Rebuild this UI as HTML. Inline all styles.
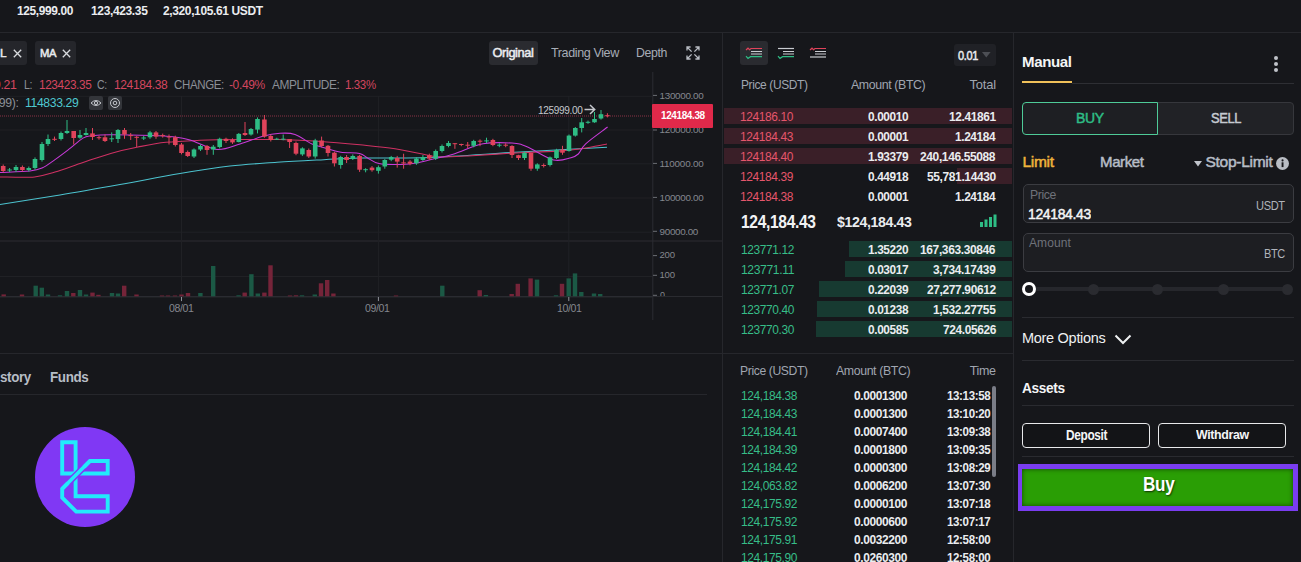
<!DOCTYPE html><html><head><meta charset="utf-8"><style>
html,body{margin:0;padding:0;}
body{width:1301px;height:562px;overflow:hidden;background:#16171b;position:relative;font-family:"Liberation Sans",sans-serif;}
.t{position:absolute;white-space:nowrap;transform-origin:0 0;}
.r{position:absolute;}
svg{position:absolute;left:0;top:0;}
</style></head><body>
<svg width="722" height="353" viewBox="0 0 722 353" style="left:0;top:0">
<rect x="0" y="95.8" width="652" height="1" fill="#202125"/>
<rect x="0" y="129.5" width="652" height="1" fill="#202125"/>
<rect x="0" y="163.3" width="652" height="1" fill="#202125"/>
<rect x="0" y="197.5" width="652" height="1" fill="#202125"/>
<rect x="0" y="231.7" width="652" height="1" fill="#202125"/>
<rect x="0" y="276" width="652" height="1" fill="#202125"/>
<rect x="0" y="240.5" width="722" height="1" fill="#2c2d32"/>
<rect x="181.0" y="96" width="1" height="206" fill="#202125"/>
<rect x="377.9" y="96" width="1" height="206" fill="#202125"/>
<rect x="568.3" y="96" width="1" height="206" fill="#202125"/>
<rect x="652.3" y="72" width="1" height="248" fill="#2c2d32"/>
<rect x="653" y="94.9" width="4" height="1" fill="#6a6d73"/>
<rect x="653" y="129.5" width="4" height="1" fill="#6a6d73"/>
<rect x="653" y="162.9" width="4" height="1" fill="#6a6d73"/>
<rect x="653" y="196.9" width="4" height="1" fill="#6a6d73"/>
<rect x="653" y="230.8" width="4" height="1" fill="#6a6d73"/>
<rect x="653" y="255.1" width="4" height="1" fill="#6a6d73"/>
<rect x="653" y="274.8" width="4" height="1" fill="#6a6d73"/>
<rect x="653" y="294.8" width="4" height="1" fill="#6a6d73"/>
<rect x="0" y="296.3" width="652" height="1" fill="#34363b"/>
<rect x="181.0" y="297" width="1" height="4" fill="#8e9199"/>
<rect x="377.9" y="297" width="1" height="4" fill="#8e9199"/>
<rect x="568.3" y="297" width="1" height="4" fill="#8e9199"/>
<line x1="0" y1="116" x2="652" y2="116" stroke="#8a3346" stroke-width="1" stroke-dasharray="1 1"/>
<rect x="1.5" y="294.4" width="4.4" height="1.9" fill="#752439"/>
<rect x="19.8" y="294.5" width="4.4" height="1.8" fill="#752439"/>
<rect x="33.5" y="285.7" width="4.4" height="10.6" fill="#1b5945"/>
<rect x="39.6" y="287.7" width="4.4" height="8.6" fill="#1b5945"/>
<rect x="45.8" y="294.5" width="4.4" height="1.8" fill="#1b5945"/>
<rect x="57.8" y="295.3" width="4.4" height="1.0" fill="#1b5945"/>
<rect x="64.8" y="291.0" width="4.4" height="5.3" fill="#1b5945"/>
<rect x="71.1" y="293.0" width="4.4" height="3.3" fill="#752439"/>
<rect x="77.8" y="290.0" width="4.4" height="6.3" fill="#1b5945"/>
<rect x="83.8" y="294.5" width="4.4" height="1.8" fill="#1b5945"/>
<rect x="90.3" y="292.6" width="4.4" height="3.7" fill="#752439"/>
<rect x="96.2" y="294.8" width="4.4" height="1.5" fill="#752439"/>
<rect x="109.8" y="293.0" width="4.4" height="3.3" fill="#1b5945"/>
<rect x="115.8" y="293.5" width="4.4" height="2.8" fill="#1b5945"/>
<rect x="122.0" y="285.7" width="4.4" height="10.6" fill="#752439"/>
<rect x="134.3" y="294.5" width="4.4" height="1.8" fill="#752439"/>
<rect x="159.8" y="295.5" width="4.4" height="0.8" fill="#752439"/>
<rect x="165.8" y="295.5" width="4.4" height="0.8" fill="#752439"/>
<rect x="172.8" y="295.5" width="4.4" height="0.8" fill="#752439"/>
<rect x="179.3" y="294.5" width="4.4" height="1.8" fill="#752439"/>
<rect x="185.8" y="293.0" width="4.4" height="3.3" fill="#752439"/>
<rect x="198.2" y="293.0" width="4.4" height="3.3" fill="#1b5945"/>
<rect x="211.0" y="266.0" width="4.4" height="30.3" fill="#1b5945"/>
<rect x="236.4" y="295.3" width="4.4" height="1.0" fill="#1b5945"/>
<rect x="242.5" y="292.6" width="4.4" height="3.7" fill="#752439"/>
<rect x="249.2" y="274.2" width="4.4" height="22.1" fill="#1b5945"/>
<rect x="255.6" y="293.5" width="4.4" height="2.8" fill="#1b5945"/>
<rect x="262.2" y="292.6" width="4.4" height="3.7" fill="#752439"/>
<rect x="268.3" y="265.3" width="4.4" height="31.0" fill="#752439"/>
<rect x="287.8" y="295.5" width="4.4" height="0.8" fill="#752439"/>
<rect x="293.8" y="295.3" width="4.4" height="1.0" fill="#752439"/>
<rect x="299.8" y="295.3" width="4.4" height="1.0" fill="#1b5945"/>
<rect x="312.6" y="294.5" width="4.4" height="1.8" fill="#1b5945"/>
<rect x="318.8" y="283.3" width="4.4" height="13.0" fill="#752439"/>
<rect x="325.0" y="280.0" width="4.4" height="16.3" fill="#752439"/>
<rect x="331.2" y="293.5" width="4.4" height="2.8" fill="#752439"/>
<rect x="393.8" y="295.5" width="4.4" height="0.8" fill="#752439"/>
<rect x="440.1" y="285.7" width="4.4" height="10.6" fill="#1b5945"/>
<rect x="477.5" y="290.2" width="4.4" height="6.1" fill="#752439"/>
<rect x="483.7" y="295.0" width="4.4" height="1.3" fill="#1b5945"/>
<rect x="509.5" y="294.0" width="4.4" height="2.3" fill="#752439"/>
<rect x="515.6" y="283.8" width="4.4" height="12.5" fill="#752439"/>
<rect x="528.4" y="278.4" width="4.4" height="17.9" fill="#752439"/>
<rect x="534.8" y="279.6" width="4.4" height="16.7" fill="#1b5945"/>
<rect x="553.8" y="295.3" width="4.4" height="1.0" fill="#1b5945"/>
<rect x="559.8" y="283.8" width="4.4" height="12.5" fill="#752439"/>
<rect x="566.5" y="278.4" width="4.4" height="17.9" fill="#1b5945"/>
<rect x="572.8" y="273.4" width="4.4" height="22.9" fill="#1b5945"/>
<rect x="579.1" y="292.0" width="4.4" height="4.3" fill="#1b5945"/>
<rect x="591.8" y="293.5" width="4.4" height="2.8" fill="#1b5945"/>
<rect x="598.0" y="294.0" width="4.4" height="2.3" fill="#1b5945"/>
<path d="M0,204.5 C10.0,202.9 40.0,198.3 60.0,195.0 C80.0,191.7 100.0,188.1 120.0,184.5 C140.0,180.9 161.7,176.6 180.0,173.5 C198.3,170.4 213.8,167.9 230.0,166.0 C246.2,164.1 261.3,163.4 277.0,162.3 C292.7,161.2 310.2,160.4 324.0,159.7 C337.8,159.0 342.3,158.4 360.0,158.0 C377.7,157.6 403.3,158.5 430.0,157.5 C456.7,156.5 490.5,153.7 520.0,152.0 C549.5,150.3 592.5,148.1 607.0,147.3" fill="none" stroke="#4cc3cf" stroke-width="1.05"/>
<path d="M0,176.9 C5.8,176.9 25.4,177.7 34.6,176.9 C43.8,176.1 46.9,174.4 55.0,172.0 C63.1,169.6 73.7,165.5 83.0,162.4 C92.3,159.3 101.5,156.0 110.7,153.4 C119.9,150.8 128.8,148.8 138.0,147.0 C147.2,145.2 155.7,143.4 166.0,142.3 C176.3,141.2 187.7,140.8 200.0,140.3 C212.3,139.8 226.7,139.6 240.0,139.5 C253.3,139.4 267.0,139.3 280.0,139.6 C293.0,139.9 304.7,140.4 318.0,141.3 C331.3,142.2 347.2,143.6 360.0,144.8 C372.8,146.1 383.3,147.0 395.0,148.8 C406.7,150.6 422.2,154.3 430.0,155.7 C437.8,157.1 435.7,157.0 442.0,157.0 C448.3,157.0 455.0,156.6 468.0,155.9 C481.0,155.2 504.7,153.5 520.0,152.7 C535.3,151.9 549.5,151.7 560.0,151.0 C570.5,150.3 575.2,149.6 583.0,148.4 C590.8,147.2 603.0,144.7 607.0,144.0" fill="none" stroke="#cf3163" stroke-width="1.05"/>
<path d="M0,172.5 C5.0,172.2 23.0,171.8 30.0,171.0 C37.0,170.2 37.8,169.9 42.0,168.0 C46.2,166.1 50.5,162.7 55.0,159.6 C59.5,156.5 64.3,152.8 69.0,149.2 C73.7,145.6 79.2,140.3 83.0,138.1 C86.8,135.9 87.5,136.4 92.0,135.8 C96.5,135.2 100.0,134.8 110.0,134.7 C120.0,134.6 141.5,135.1 152.0,135.4 C162.5,135.8 166.7,136.0 173.0,136.8 C179.3,137.6 182.7,137.9 190.0,140.0 C197.3,142.1 208.7,148.8 217.0,149.5 C225.3,150.2 232.5,146.2 240.0,144.0 C247.5,141.8 255.3,138.4 262.0,136.6 C268.7,134.8 274.5,133.7 280.0,133.3 C285.5,132.9 289.7,132.6 295.0,134.4 C300.3,136.2 306.8,141.7 312.0,144.0 C317.2,146.3 321.2,146.8 326.0,148.2 C330.8,149.6 335.4,151.4 341.0,152.3 C346.6,153.2 355.2,152.5 359.6,153.4 C364.0,154.3 364.4,156.3 367.6,158.0 C370.8,159.7 373.4,162.5 379.0,163.6 C384.6,164.7 394.5,164.6 401.0,164.4 C407.5,164.2 413.2,163.5 418.0,162.7 C422.8,161.9 424.0,161.2 430.0,159.8 C436.0,158.4 445.2,156.7 454.0,154.0 C462.8,151.3 473.3,145.6 483.0,143.8 C492.7,142.0 504.7,142.6 512.0,143.1 C519.3,143.6 520.1,143.9 527.0,146.7 C533.9,149.5 546.2,158.1 553.5,159.9 C560.8,161.7 566.9,158.7 571.0,157.7 C575.1,156.7 575.8,156.3 578.3,154.0 C580.8,151.7 580.8,148.3 585.7,143.8 C590.6,139.3 604.0,129.8 607.6,127.0" fill="none" stroke="#c83ad9" stroke-width="1.05"/>
<rect x="2.7" y="164.5" width="1" height="8.0" fill="#e0435b"/>
<rect x="0.9" y="166.0" width="4.6" height="5.0" fill="#e0435b"/>
<rect x="9.1" y="168.0" width="1" height="4.0" fill="#2ebd85"/>
<rect x="7.3" y="169.5" width="4.6" height="1.0" fill="#2ebd85"/>
<rect x="15.5" y="165.0" width="1" height="7.0" fill="#2ebd85"/>
<rect x="13.7" y="167.0" width="4.6" height="3.0" fill="#2ebd85"/>
<rect x="21.9" y="165.5" width="1" height="6.0" fill="#e0435b"/>
<rect x="20.1" y="167.0" width="4.6" height="3.0" fill="#e0435b"/>
<rect x="28.3" y="166.5" width="1" height="5.0" fill="#2ebd85"/>
<rect x="26.5" y="168.0" width="4.6" height="2.0" fill="#2ebd85"/>
<rect x="34.5" y="157.4" width="1" height="12.3" fill="#2ebd85"/>
<rect x="32.7" y="159.0" width="4.6" height="9.0" fill="#2ebd85"/>
<rect x="41.5" y="142.0" width="1" height="19.6" fill="#2ebd85"/>
<rect x="39.7" y="144.0" width="4.6" height="16.0" fill="#2ebd85"/>
<rect x="47.5" y="134.5" width="1" height="11.5" fill="#2ebd85"/>
<rect x="45.7" y="139.0" width="4.6" height="5.0" fill="#2ebd85"/>
<rect x="54.0" y="136.6" width="1" height="4.4" fill="#e0435b"/>
<rect x="52.2" y="138.8" width="4.6" height="1.0" fill="#e0435b"/>
<rect x="60.5" y="131.5" width="1" height="9.0" fill="#2ebd85"/>
<rect x="58.7" y="133.0" width="4.6" height="6.0" fill="#2ebd85"/>
<rect x="66.5" y="120.0" width="1" height="14.0" fill="#2ebd85"/>
<rect x="64.7" y="131.0" width="4.6" height="2.0" fill="#2ebd85"/>
<rect x="73.2" y="131.0" width="1" height="13.5" fill="#e0435b"/>
<rect x="71.4" y="131.0" width="4.6" height="7.0" fill="#e0435b"/>
<rect x="79.5" y="130.0" width="1" height="8.8" fill="#2ebd85"/>
<rect x="77.7" y="135.0" width="4.6" height="2.7" fill="#2ebd85"/>
<rect x="85.5" y="128.0" width="1" height="7.6" fill="#2ebd85"/>
<rect x="83.7" y="133.0" width="4.6" height="2.0" fill="#2ebd85"/>
<rect x="92.0" y="128.0" width="1" height="12.0" fill="#e0435b"/>
<rect x="90.2" y="133.4" width="4.6" height="3.6" fill="#e0435b"/>
<rect x="98.5" y="135.7" width="1" height="4.0" fill="#e0435b"/>
<rect x="96.7" y="137.2" width="4.6" height="1.0" fill="#e0435b"/>
<rect x="104.5" y="134.5" width="1" height="7.5" fill="#e0435b"/>
<rect x="102.7" y="137.3" width="4.6" height="3.7" fill="#e0435b"/>
<rect x="111.2" y="132.4" width="1" height="9.6" fill="#2ebd85"/>
<rect x="109.4" y="138.3" width="4.6" height="1.0" fill="#2ebd85"/>
<rect x="117.5" y="129.0" width="1" height="14.0" fill="#2ebd85"/>
<rect x="115.7" y="130.0" width="4.6" height="9.0" fill="#2ebd85"/>
<rect x="124.0" y="128.0" width="1" height="10.8" fill="#e0435b"/>
<rect x="122.2" y="130.0" width="4.6" height="4.5" fill="#e0435b"/>
<rect x="130.2" y="133.0" width="1" height="7.0" fill="#e0435b"/>
<rect x="128.4" y="135.1" width="4.6" height="1.0" fill="#e0435b"/>
<rect x="136.2" y="136.0" width="1" height="11.0" fill="#e0435b"/>
<rect x="134.4" y="136.8" width="4.6" height="1.0" fill="#e0435b"/>
<rect x="143.2" y="136.0" width="1" height="4.0" fill="#2ebd85"/>
<rect x="141.4" y="137.5" width="4.6" height="1.0" fill="#2ebd85"/>
<rect x="149.5" y="130.9" width="1" height="7.9" fill="#2ebd85"/>
<rect x="147.7" y="132.4" width="4.6" height="4.9" fill="#2ebd85"/>
<rect x="155.5" y="131.0" width="1" height="7.8" fill="#e0435b"/>
<rect x="153.7" y="132.4" width="4.6" height="4.2" fill="#e0435b"/>
<rect x="162.2" y="133.6" width="1" height="4.0" fill="#e0435b"/>
<rect x="160.4" y="135.1" width="4.6" height="1.0" fill="#e0435b"/>
<rect x="168.5" y="134.5" width="1" height="10.0" fill="#e0435b"/>
<rect x="166.7" y="136.5" width="4.6" height="1.0" fill="#e0435b"/>
<rect x="174.8" y="135.7" width="1" height="10.8" fill="#e0435b"/>
<rect x="173.0" y="137.2" width="4.6" height="7.8" fill="#e0435b"/>
<rect x="181.0" y="143.0" width="1" height="11.4" fill="#e0435b"/>
<rect x="179.2" y="144.5" width="4.6" height="8.5" fill="#e0435b"/>
<rect x="187.2" y="150.5" width="1" height="6.5" fill="#e0435b"/>
<rect x="185.4" y="152.0" width="4.6" height="4.0" fill="#e0435b"/>
<rect x="193.5" y="148.4" width="1" height="9.6" fill="#2ebd85"/>
<rect x="191.7" y="149.5" width="4.6" height="7.0" fill="#2ebd85"/>
<rect x="200.0" y="144.5" width="1" height="6.5" fill="#2ebd85"/>
<rect x="198.2" y="146.0" width="4.6" height="3.5" fill="#2ebd85"/>
<rect x="206.5" y="145.0" width="1" height="9.8" fill="#e0435b"/>
<rect x="204.7" y="146.0" width="4.6" height="4.0" fill="#e0435b"/>
<rect x="212.8" y="145.0" width="1" height="9.8" fill="#2ebd85"/>
<rect x="211.0" y="146.7" width="4.6" height="2.8" fill="#2ebd85"/>
<rect x="219.2" y="137.7" width="1" height="10.7" fill="#2ebd85"/>
<rect x="217.4" y="138.8" width="4.6" height="8.2" fill="#2ebd85"/>
<rect x="225.5" y="137.7" width="1" height="5.3" fill="#e0435b"/>
<rect x="223.7" y="138.8" width="4.6" height="2.2" fill="#e0435b"/>
<rect x="232.0" y="138.3" width="1" height="5.6" fill="#e0435b"/>
<rect x="230.2" y="139.8" width="4.6" height="2.6" fill="#e0435b"/>
<rect x="238.3" y="133.0" width="1" height="9.4" fill="#2ebd85"/>
<rect x="236.5" y="133.9" width="4.6" height="8.1" fill="#2ebd85"/>
<rect x="244.5" y="122.0" width="1" height="14.0" fill="#e0435b"/>
<rect x="242.7" y="133.0" width="4.6" height="2.0" fill="#e0435b"/>
<rect x="250.5" y="128.0" width="1" height="7.6" fill="#2ebd85"/>
<rect x="248.7" y="129.0" width="4.6" height="5.5" fill="#2ebd85"/>
<rect x="257.0" y="117.4" width="1" height="16.0" fill="#2ebd85"/>
<rect x="255.2" y="119.0" width="4.6" height="10.6" fill="#2ebd85"/>
<rect x="263.9" y="115.0" width="1" height="22.7" fill="#e0435b"/>
<rect x="262.1" y="119.5" width="4.6" height="17.1" fill="#e0435b"/>
<rect x="270.3" y="134.5" width="1" height="7.0" fill="#e0435b"/>
<rect x="268.5" y="136.0" width="4.6" height="4.0" fill="#e0435b"/>
<rect x="276.3" y="137.7" width="1" height="2.1" fill="#2ebd85"/>
<rect x="274.5" y="138.7" width="4.6" height="1.0" fill="#2ebd85"/>
<rect x="282.7" y="134.5" width="1" height="5.8" fill="#2ebd85"/>
<rect x="280.9" y="138.7" width="4.6" height="1.0" fill="#2ebd85"/>
<rect x="289.1" y="139.0" width="1" height="9.0" fill="#e0435b"/>
<rect x="287.3" y="139.0" width="4.6" height="3.0" fill="#e0435b"/>
<rect x="295.5" y="141.5" width="1" height="13.7" fill="#e0435b"/>
<rect x="293.7" y="143.0" width="4.6" height="10.7" fill="#e0435b"/>
<rect x="301.9" y="147.3" width="1" height="8.6" fill="#2ebd85"/>
<rect x="300.1" y="148.4" width="4.6" height="6.0" fill="#2ebd85"/>
<rect x="308.3" y="148.5" width="1" height="9.5" fill="#e0435b"/>
<rect x="306.5" y="150.0" width="4.6" height="6.5" fill="#e0435b"/>
<rect x="314.7" y="138.8" width="1" height="19.8" fill="#2ebd85"/>
<rect x="312.9" y="140.5" width="4.6" height="16.0" fill="#2ebd85"/>
<rect x="321.1" y="136.6" width="1" height="10.7" fill="#e0435b"/>
<rect x="319.3" y="140.5" width="4.6" height="5.5" fill="#e0435b"/>
<rect x="327.5" y="145.0" width="1" height="11.5" fill="#e0435b"/>
<rect x="325.7" y="145.8" width="4.6" height="7.2" fill="#e0435b"/>
<rect x="333.9" y="151.6" width="1" height="14.9" fill="#e0435b"/>
<rect x="332.1" y="152.7" width="4.6" height="10.6" fill="#e0435b"/>
<rect x="340.2" y="155.8" width="1" height="12.9" fill="#2ebd85"/>
<rect x="338.4" y="157.0" width="4.6" height="8.0" fill="#2ebd85"/>
<rect x="346.1" y="155.0" width="1" height="8.0" fill="#e0435b"/>
<rect x="344.3" y="157.0" width="4.6" height="3.0" fill="#e0435b"/>
<rect x="352.3" y="154.4" width="1" height="5.6" fill="#2ebd85"/>
<rect x="350.5" y="156.0" width="4.6" height="3.0" fill="#2ebd85"/>
<rect x="359.1" y="154.8" width="1" height="17.1" fill="#e0435b"/>
<rect x="357.3" y="155.9" width="4.6" height="13.8" fill="#e0435b"/>
<rect x="365.1" y="168.2" width="1" height="4.1" fill="#2ebd85"/>
<rect x="363.3" y="169.2" width="4.6" height="1.0" fill="#2ebd85"/>
<rect x="371.5" y="166.1" width="1" height="5.6" fill="#e0435b"/>
<rect x="369.7" y="167.6" width="4.6" height="2.6" fill="#e0435b"/>
<rect x="377.9" y="165.5" width="1" height="8.1" fill="#2ebd85"/>
<rect x="376.1" y="167.2" width="4.6" height="3.6" fill="#2ebd85"/>
<rect x="384.3" y="159.0" width="1" height="9.7" fill="#2ebd85"/>
<rect x="382.5" y="160.0" width="4.6" height="6.5" fill="#2ebd85"/>
<rect x="390.7" y="155.9" width="1" height="5.3" fill="#2ebd85"/>
<rect x="388.9" y="157.0" width="4.6" height="2.7" fill="#2ebd85"/>
<rect x="396.7" y="155.9" width="1" height="11.7" fill="#e0435b"/>
<rect x="394.9" y="158.0" width="4.6" height="3.6" fill="#e0435b"/>
<rect x="403.1" y="153.7" width="1" height="15.0" fill="#e0435b"/>
<rect x="401.3" y="162.4" width="4.6" height="1.0" fill="#e0435b"/>
<rect x="409.5" y="160.1" width="1" height="5.2" fill="#e0435b"/>
<rect x="407.7" y="161.6" width="4.6" height="2.2" fill="#e0435b"/>
<rect x="415.9" y="157.1" width="1" height="7.7" fill="#2ebd85"/>
<rect x="414.1" y="158.6" width="4.6" height="4.7" fill="#2ebd85"/>
<rect x="422.4" y="155.0" width="1" height="6.0" fill="#2ebd85"/>
<rect x="420.6" y="157.0" width="4.6" height="3.0" fill="#2ebd85"/>
<rect x="428.8" y="153.7" width="1" height="6.4" fill="#e0435b"/>
<rect x="427.0" y="155.2" width="4.6" height="3.4" fill="#e0435b"/>
<rect x="435.2" y="149.5" width="1" height="10.5" fill="#2ebd85"/>
<rect x="433.4" y="151.0" width="4.6" height="7.6" fill="#2ebd85"/>
<rect x="441.5" y="144.5" width="1" height="8.0" fill="#2ebd85"/>
<rect x="439.7" y="146.0" width="4.6" height="5.0" fill="#2ebd85"/>
<rect x="448.0" y="141.0" width="1" height="6.3" fill="#2ebd85"/>
<rect x="446.2" y="143.0" width="4.6" height="3.0" fill="#2ebd85"/>
<rect x="454.4" y="143.0" width="1" height="5.8" fill="#e0435b"/>
<rect x="452.6" y="143.2" width="4.6" height="1.0" fill="#e0435b"/>
<rect x="460.8" y="143.7" width="1" height="2.5" fill="#e0435b"/>
<rect x="459.0" y="144.0" width="4.6" height="1.0" fill="#e0435b"/>
<rect x="467.2" y="142.0" width="1" height="6.0" fill="#e0435b"/>
<rect x="465.4" y="144.7" width="4.6" height="1.0" fill="#e0435b"/>
<rect x="473.2" y="139.8" width="1" height="7.5" fill="#2ebd85"/>
<rect x="471.4" y="141.0" width="4.6" height="4.8" fill="#2ebd85"/>
<rect x="479.5" y="139.4" width="1" height="6.8" fill="#e0435b"/>
<rect x="477.7" y="140.7" width="4.6" height="1.0" fill="#e0435b"/>
<rect x="486.0" y="137.7" width="1" height="5.3" fill="#2ebd85"/>
<rect x="484.2" y="140.4" width="4.6" height="1.0" fill="#2ebd85"/>
<rect x="492.4" y="138.8" width="1" height="7.4" fill="#e0435b"/>
<rect x="490.6" y="140.0" width="4.6" height="5.0" fill="#e0435b"/>
<rect x="498.8" y="143.2" width="1" height="4.0" fill="#2ebd85"/>
<rect x="497.0" y="144.7" width="4.6" height="1.0" fill="#2ebd85"/>
<rect x="505.2" y="143.2" width="1" height="4.0" fill="#e0435b"/>
<rect x="503.4" y="144.7" width="4.6" height="1.0" fill="#e0435b"/>
<rect x="511.5" y="145.2" width="1" height="12.8" fill="#e0435b"/>
<rect x="509.7" y="146.0" width="4.6" height="9.0" fill="#e0435b"/>
<rect x="518.0" y="154.8" width="1" height="5.2" fill="#e0435b"/>
<rect x="516.2" y="155.2" width="4.6" height="2.8" fill="#e0435b"/>
<rect x="524.0" y="151.6" width="1" height="8.4" fill="#2ebd85"/>
<rect x="522.2" y="152.7" width="4.6" height="5.3" fill="#2ebd85"/>
<rect x="530.5" y="152.7" width="1" height="18.1" fill="#e0435b"/>
<rect x="528.7" y="153.0" width="4.6" height="15.7" fill="#e0435b"/>
<rect x="536.8" y="163.3" width="1" height="7.5" fill="#2ebd85"/>
<rect x="535.0" y="164.4" width="4.6" height="4.3" fill="#2ebd85"/>
<rect x="543.2" y="163.5" width="1" height="4.0" fill="#e0435b"/>
<rect x="541.4" y="165.0" width="4.6" height="1.0" fill="#e0435b"/>
<rect x="549.5" y="156.5" width="1" height="10.0" fill="#2ebd85"/>
<rect x="547.7" y="157.4" width="4.6" height="7.6" fill="#2ebd85"/>
<rect x="556.0" y="148.8" width="1" height="10.2" fill="#2ebd85"/>
<rect x="554.2" y="150.0" width="4.6" height="8.0" fill="#2ebd85"/>
<rect x="562.0" y="145.8" width="1" height="9.0" fill="#e0435b"/>
<rect x="560.2" y="149.5" width="4.6" height="3.2" fill="#e0435b"/>
<rect x="568.5" y="134.5" width="1" height="17.1" fill="#2ebd85"/>
<rect x="566.7" y="135.6" width="4.6" height="15.4" fill="#2ebd85"/>
<rect x="574.8" y="127.0" width="1" height="9.6" fill="#2ebd85"/>
<rect x="573.0" y="128.0" width="4.6" height="7.6" fill="#2ebd85"/>
<rect x="581.2" y="118.0" width="1" height="14.4" fill="#2ebd85"/>
<rect x="579.4" y="122.3" width="4.6" height="5.7" fill="#2ebd85"/>
<rect x="587.5" y="120.6" width="1" height="3.2" fill="#2ebd85"/>
<rect x="585.7" y="121.8" width="4.6" height="1.0" fill="#2ebd85"/>
<rect x="594.0" y="112.0" width="1" height="10.8" fill="#2ebd85"/>
<rect x="592.2" y="119.0" width="4.6" height="3.3" fill="#2ebd85"/>
<rect x="600.5" y="110.0" width="1" height="9.6" fill="#2ebd85"/>
<rect x="598.7" y="114.2" width="4.6" height="4.3" fill="#2ebd85"/>
<rect x="606.9" y="113.2" width="1" height="4.2" fill="#e0435b"/>
<rect x="605.1" y="115.2" width="4.6" height="1.0" fill="#e0435b"/>
</svg>
<div class="t" style="left:17.40px;top:2.08px;font-size:12.97px;line-height:17px;letter-spacing:-0.400px;color:#eaecef;font-weight:700;transform:scaleX(0.9186);">125,999.00</div>
<div class="t" style="left:90.70px;top:2.08px;font-size:12.97px;line-height:17px;letter-spacing:-0.400px;color:#eaecef;font-weight:700;transform:scaleX(0.9267);">123,423.35</div>
<div class="t" style="left:163.00px;top:2.08px;font-size:12.97px;line-height:17px;letter-spacing:-0.400px;color:#eaecef;font-weight:700;transform:scaleX(0.9241);">2,320,105.61 USDT</div>
<div class="r" style="left:0px;top:32px;width:1301px;height:1px;background:#26272c;"></div>
<div class="r" style="left:722px;top:33px;width:1px;height:529px;background:#26272c;"></div>
<div class="r" style="left:1013px;top:33px;width:1px;height:529px;background:#26272c;"></div>
<div class="r" style="left:-4px;top:41px;width:31px;height:24px;background:#25262b;border-radius:3px;"></div>
<div class="t" style="left:0.00px;top:45.42px;font-size:11.77px;line-height:15px;letter-spacing:0.266px;color:#eaecef;font-weight:400;transform:scaleX(1.0000);-webkit-text-stroke:0.5px #eaecef;">L</div>
<div class="r" style="left:35px;top:41px;width:41px;height:24px;background:#25262b;border-radius:3px;"></div>
<div class="t" style="left:39.50px;top:45.42px;font-size:11.77px;line-height:15px;letter-spacing:-0.400px;color:#eaecef;font-weight:400;transform:scaleX(0.9527);-webkit-text-stroke:0.5px #eaecef;">MA</div>
<svg style="left:12.600000000000001px;top:48.5px" width="9" height="9" viewBox="0 0 9 9"><path d="M0.8 0.8L8.2 8.2M8.2 0.8L0.8 8.2" stroke="#d8dade" stroke-width="1.3"/></svg>
<svg style="left:61.7px;top:48.5px" width="9" height="9" viewBox="0 0 9 9"><path d="M0.8 0.8L8.2 8.2M8.2 0.8L0.8 8.2" stroke="#d8dade" stroke-width="1.3"/></svg>
<div class="r" style="left:489px;top:41px;width:49px;height:23.5px;background:#2a2b30;border-radius:3px;"></div>
<div class="t" style="left:492.50px;top:44.17px;font-size:12.79px;line-height:17px;letter-spacing:-0.381px;color:#eaecef;font-weight:400;transform:scaleX(1.0000);-webkit-text-stroke:0.5px #eaecef;">Original</div>
<div class="t" style="left:551.00px;top:44.17px;font-size:12.79px;line-height:17px;letter-spacing:-0.400px;color:#a7adb7;font-weight:400;transform:scaleX(0.9814);">Trading View</div>
<div class="t" style="left:636.00px;top:44.17px;font-size:12.79px;line-height:17px;letter-spacing:-0.400px;color:#a7adb7;font-weight:400;transform:scaleX(0.9616);">Depth</div>
<svg style="left:686px;top:45.5px" width="14" height="14" viewBox="0 0 14 14" fill="none" stroke="#b9bdc4" stroke-width="1.3"><path d="M1 4.6V1H4.6M1.2 1.2L5.6 5.6M9.4 1H13V4.6M12.8 1.2L8.4 5.6M1 9.4V13H4.6M1.2 12.8L5.6 8.4M9.4 13H13V9.4M12.8 12.8L8.4 8.4"/></svg>
<div class="t" style="left:-6.00px;top:76.82px;font-size:12.65px;line-height:16px;letter-spacing:-0.400px;color:#d4465f;font-weight:400;transform:scaleX(0.9703);">9.21</div>
<div class="t" style="left:23.70px;top:76.82px;font-size:12.65px;line-height:16px;letter-spacing:-0.400px;color:#8b8f97;font-weight:400;transform:scaleX(0.8466);">L:</div>
<div class="t" style="left:39.30px;top:76.82px;font-size:12.65px;line-height:16px;letter-spacing:-0.400px;color:#d4465f;font-weight:400;transform:scaleX(0.9319);">123423.35</div>
<div class="t" style="left:97.40px;top:76.82px;font-size:12.65px;line-height:16px;letter-spacing:-0.400px;color:#8b8f97;font-weight:400;transform:scaleX(0.8330);">C:</div>
<div class="t" style="left:114.30px;top:76.82px;font-size:12.65px;line-height:16px;letter-spacing:-0.400px;color:#d4465f;font-weight:400;transform:scaleX(0.9514);">124184.38</div>
<div class="t" style="left:173.90px;top:76.82px;font-size:12.65px;line-height:16px;letter-spacing:-0.400px;color:#8b8f97;font-weight:400;transform:scaleX(0.9112);">CHANGE:</div>
<div class="t" style="left:229.00px;top:76.82px;font-size:12.65px;line-height:16px;letter-spacing:-0.400px;color:#d4465f;font-weight:400;transform:scaleX(0.9505);">-0.49%</div>
<div class="t" style="left:271.60px;top:76.82px;font-size:12.65px;line-height:16px;letter-spacing:-0.400px;color:#8b8f97;font-weight:400;transform:scaleX(0.9395);">AMPLITUDE:</div>
<div class="t" style="left:345.20px;top:76.82px;font-size:12.65px;line-height:16px;letter-spacing:-0.400px;color:#d4465f;font-weight:400;transform:scaleX(0.9080);">1.33%</div>
<div class="t" style="left:-5.00px;top:94.12px;font-size:12.94px;line-height:17px;letter-spacing:-0.400px;color:#8b8f97;font-weight:400;transform:scaleX(0.9526);">(99):</div>
<div class="t" style="left:24.80px;top:94.12px;font-size:12.94px;line-height:17px;letter-spacing:-0.400px;color:#4fc8d0;font-weight:400;transform:scaleX(0.9436);">114833.29</div>
<div class="r" style="left:89px;top:96px;width:14px;height:14px;background:#33353a;border-radius:2px;"></div>
<div class="r" style="left:108px;top:96px;width:14px;height:14px;background:#33353a;border-radius:2px;"></div>
<svg style="left:89px;top:96px" width="14" height="14" viewBox="0 0 14 14" fill="none" stroke="#c4c7cc" stroke-width="1"><path d="M2 7Q7 2 12 7Q7 12 2 7Z"/><circle cx="7" cy="7" r="1.6"/></svg>
<svg style="left:108px;top:96px" width="14" height="14" viewBox="0 0 14 14" fill="none" stroke="#c4c7cc" stroke-width="1"><circle cx="7" cy="7" r="4.5"/><circle cx="7" cy="7" r="1.8"/></svg>
<div class="t" style="left:659.60px;top:88.88px;font-size:9.88px;line-height:13px;letter-spacing:-0.325px;color:#84878e;font-weight:400;transform:scaleX(1.0000);">130000.00</div>
<div class="t" style="left:659.60px;top:123.48px;font-size:9.88px;line-height:13px;letter-spacing:-0.325px;color:#84878e;font-weight:400;transform:scaleX(1.0000);">120000.00</div>
<div class="t" style="left:659.60px;top:156.88px;font-size:9.88px;line-height:13px;letter-spacing:-0.239px;color:#84878e;font-weight:400;transform:scaleX(1.0000);">110000.00</div>
<div class="t" style="left:659.60px;top:190.88px;font-size:9.88px;line-height:13px;letter-spacing:-0.325px;color:#84878e;font-weight:400;transform:scaleX(1.0000);">100000.00</div>
<div class="t" style="left:659.60px;top:224.78px;font-size:9.88px;line-height:13px;letter-spacing:-0.345px;color:#84878e;font-weight:400;transform:scaleX(1.0000);">90000.00</div>
<div class="t" style="left:659.60px;top:249.38px;font-size:9.59px;line-height:12px;letter-spacing:-0.310px;color:#84878e;font-weight:400;transform:scaleX(1.0000);">200</div>
<div class="t" style="left:659.60px;top:269.48px;font-size:9.59px;line-height:12px;letter-spacing:-0.310px;color:#84878e;font-weight:400;transform:scaleX(1.0000);">100</div>
<div class="t" style="left:659.60px;top:289.28px;font-size:9.59px;line-height:12px;letter-spacing:-0.400px;color:#84878e;font-weight:400;transform:scaleX(0.9342);">0</div>
<div class="r" style="left:657px;top:296.9px;width:40px;height:6px;background:#16171b;"></div>
<div class="r" style="left:652.3px;top:296.4px;width:70px;height:1px;background:#2a2b30;"></div>
<div class="t" style="left:168.80px;top:300.47px;font-size:11.63px;line-height:15px;letter-spacing:-0.400px;color:#84878e;font-weight:400;transform:scaleX(0.9082);">08/01</div>
<div class="t" style="left:365.30px;top:300.47px;font-size:11.63px;line-height:15px;letter-spacing:-0.400px;color:#84878e;font-weight:400;transform:scaleX(0.9082);">09/01</div>
<div class="t" style="left:556.50px;top:300.47px;font-size:11.63px;line-height:15px;letter-spacing:-0.400px;color:#84878e;font-weight:400;transform:scaleX(0.9082);">10/01</div>
<div class="r" style="left:652px;top:104px;width:61px;height:24px;background:#e0294a;border-radius:1px;"></div>
<div class="t" style="left:660.80px;top:109.17px;font-size:10.17px;line-height:13px;letter-spacing:-0.400px;color:#ffffff;font-weight:700;transform:scaleX(0.9850);">124184.38</div>
<div class="t" style="left:537.80px;top:101.97px;font-size:11.63px;line-height:15px;letter-spacing:-0.400px;color:#c5c8cd;font-weight:400;transform:scaleX(0.8658);">125999.00</div>
<svg style="left:584px;top:104px" width="12" height="11" viewBox="0 0 12 11" fill="none" stroke="#c5c8cd" stroke-width="1.5"><path d="M0.5 5.5H10.5M6 1L10.7 5.5L6 10"/></svg>
<div class="r" style="left:0px;top:353px;width:722px;height:1px;background:#26272c;"></div>
<div class="t" style="left:-0.30px;top:368.16px;font-size:14.24px;line-height:19px;letter-spacing:-0.400px;color:#b7bdc6;font-weight:700;transform:scaleX(0.9390);">story</div>
<div class="t" style="left:49.60px;top:368.16px;font-size:14.24px;line-height:19px;letter-spacing:-0.400px;color:#b7bdc6;font-weight:700;transform:scaleX(0.9433);">Funds</div>
<div class="r" style="left:0px;top:394px;width:707px;height:1px;background:#26272c;"></div>
<svg style="left:35px;top:427px" width="100" height="100" viewBox="35 427 100 100">
<circle cx="85" cy="477" r="50" fill="#8038f4"/>
<g fill="none" stroke="#22ebfb" stroke-width="3.9" stroke-linejoin="miter">
<path d="M62.2 442.3H75.6V473.5H62.2Z"/>
<path d="M107.7 461H90L62.2 488.8V497.6L76.2 511.6H107.7V496.2H75.6V473.5H107.7Z"/>
<path d="M68 483L84 467" stroke="#8038f4" stroke-width="6.6" stroke-linecap="butt"/>
<path d="M62.2 488.8L90.4 460.6" stroke-width="3.6"/>
</g></svg>
<div class="r" style="left:740px;top:41.2px;width:28px;height:24px;background:#2a2b30;border-radius:3px;"></div>
<svg style="left:745px;top:47px" width="18" height="13" viewBox="0 0 18 13" fill="none" stroke-width="1.2"><path d="M1 3L3 1.2L4.5 2.7L6 1.5H17" stroke="#e0435b"/><path d="M6 4.5H17M6 7H17" stroke="#c9ccd1"/><path d="M1 9.2L3 11.5L5.5 9.7H17" stroke="#2ebd85"/></svg>
<svg style="left:777px;top:47px" width="18" height="13" viewBox="0 0 18 13" fill="none" stroke-width="1.2"><path d="M1 1.5H17" stroke="#c9ccd1"/><path d="M6 4.5H17M6 7H17" stroke="#c9ccd1"/><path d="M1 9.2L3 11.5L5.5 9.7H17" stroke="#2ebd85"/></svg>
<svg style="left:809px;top:47px" width="18" height="13" viewBox="0 0 18 13" fill="none" stroke-width="1.2"><path d="M1 3L3 1.2L4.5 2.7L6 1.5H17" stroke="#e0435b"/><path d="M6 4.5H17M6 7H17" stroke="#c9ccd1"/><path d="M1 10H17" stroke="#c9ccd1"/></svg>
<div class="r" style="left:954px;top:43.6px;width:42px;height:22.7px;background:#202126;border-radius:3px;"></div>
<div class="t" style="left:958.10px;top:46.97px;font-size:12.79px;line-height:17px;letter-spacing:-0.400px;color:#eaecef;font-weight:400;transform:scaleX(0.8573);-webkit-text-stroke:0.5px #eaecef;">0.01</div>
<svg style="left:982.3px;top:52.4px" width="9" height="6" viewBox="0 0 9 6"><path d="M0 0H8.6L4.3 5.4Z" fill="#4d4f55"/></svg>
<div class="t" style="left:740.50px;top:76.32px;font-size:12.94px;line-height:17px;letter-spacing:-0.400px;color:#a0a6b1;font-weight:400;transform:scaleX(0.9241);">Price (USDT)</div>
<div class="t" style="left:851.00px;top:76.32px;font-size:12.94px;line-height:17px;letter-spacing:-0.400px;color:#a0a6b1;font-weight:400;transform:scaleX(0.9545);">Amount (BTC)</div>
<div class="t" style="left:969.60px;top:76.32px;font-size:12.94px;line-height:17px;letter-spacing:-0.224px;color:#a0a6b1;font-weight:400;transform:scaleX(1.0000);">Total</div>
<div class="r" style="left:724px;top:108.10000000000001px;width:288px;height:15.8px;background:#3a1f28;"></div>
<div class="t" style="left:740.40px;top:108.17px;font-size:12.79px;line-height:17px;letter-spacing:-0.400px;color:#e5566b;font-weight:400;transform:scaleX(0.9337);">124186.10</div>
<div class="t" style="left:868.32px;top:108.17px;font-size:12.79px;line-height:17px;letter-spacing:-0.400px;color:#eaecef;font-weight:700;transform:scaleX(0.9280);">0.00010</div>
<div class="t" style="left:948.94px;top:108.17px;font-size:12.79px;line-height:17px;letter-spacing:-0.400px;color:#eaecef;font-weight:700;transform:scaleX(0.9312);">12.41861</div>
<div class="r" style="left:724px;top:128.1px;width:288px;height:15.8px;background:#3a1f28;"></div>
<div class="t" style="left:740.40px;top:128.17px;font-size:12.79px;line-height:17px;letter-spacing:-0.400px;color:#e5566b;font-weight:400;transform:scaleX(0.9337);">124184.43</div>
<div class="t" style="left:868.32px;top:128.17px;font-size:12.79px;line-height:17px;letter-spacing:-0.400px;color:#eaecef;font-weight:700;transform:scaleX(0.9280);">0.00001</div>
<div class="t" style="left:955.32px;top:128.17px;font-size:12.79px;line-height:17px;letter-spacing:-0.400px;color:#eaecef;font-weight:700;transform:scaleX(0.9280);">1.24184</div>
<div class="r" style="left:724px;top:148.1px;width:288px;height:15.8px;background:#3a1f28;"></div>
<div class="t" style="left:740.40px;top:148.17px;font-size:12.79px;line-height:17px;letter-spacing:-0.400px;color:#e5566b;font-weight:400;transform:scaleX(0.9337);">124184.40</div>
<div class="t" style="left:868.32px;top:148.17px;font-size:12.79px;line-height:17px;letter-spacing:-0.400px;color:#eaecef;font-weight:700;transform:scaleX(0.9280);">1.93379</div>
<div class="t" style="left:920.42px;top:148.17px;font-size:12.79px;line-height:17px;letter-spacing:-0.400px;color:#eaecef;font-weight:700;transform:scaleX(0.9380);">240,146.55088</div>
<div class="r" style="left:957px;top:168.1px;width:55px;height:15.8px;background:#3a1f28;"></div>
<div class="t" style="left:740.40px;top:168.17px;font-size:12.79px;line-height:17px;letter-spacing:-0.400px;color:#e5566b;font-weight:400;transform:scaleX(0.9337);">124184.39</div>
<div class="t" style="left:868.32px;top:168.17px;font-size:12.79px;line-height:17px;letter-spacing:-0.400px;color:#eaecef;font-weight:700;transform:scaleX(0.9280);">0.44918</div>
<div class="t" style="left:926.80px;top:168.17px;font-size:12.79px;line-height:17px;letter-spacing:-0.400px;color:#eaecef;font-weight:700;transform:scaleX(0.9375);">55,781.14430</div>
<div class="t" style="left:740.40px;top:188.17px;font-size:12.79px;line-height:17px;letter-spacing:-0.400px;color:#e5566b;font-weight:400;transform:scaleX(0.9337);">124184.38</div>
<div class="t" style="left:868.32px;top:188.17px;font-size:12.79px;line-height:17px;letter-spacing:-0.400px;color:#eaecef;font-weight:700;transform:scaleX(0.9280);">0.00001</div>
<div class="t" style="left:955.32px;top:188.17px;font-size:12.79px;line-height:17px;letter-spacing:-0.400px;color:#eaecef;font-weight:700;transform:scaleX(0.9280);">1.24184</div>
<div class="t" style="left:741.00px;top:210.65px;font-size:18.02px;line-height:23px;letter-spacing:-0.400px;color:#f2f3f5;font-weight:700;transform:scaleX(0.8660);">124,184.43</div>
<div class="t" style="left:837.00px;top:211.76px;font-size:15.12px;line-height:20px;letter-spacing:-0.400px;color:#eaecef;font-weight:700;transform:scaleX(0.9370);">$124,184.43</div>
<svg style="left:980px;top:214px" width="17" height="13" viewBox="0 0 17 13"><rect x="0" y="8" width="3" height="5" fill="#2ebd85"/><rect x="4.5" y="5.5" width="3" height="7.5" fill="#2ebd85"/><rect x="9" y="3" width="3" height="10" fill="#2ebd85"/><rect x="13.5" y="0.5" width="3" height="12.5" fill="#2ebd85"/></svg>
<div class="r" style="left:848.8px;top:241.0px;width:163.20000000000005px;height:15.8px;background:#173a31;"></div>
<div class="t" style="left:740.80px;top:240.97px;font-size:12.79px;line-height:17px;letter-spacing:-0.400px;color:#36bd88;font-weight:400;transform:scaleX(0.9337);">123771.12</div>
<div class="t" style="left:868.32px;top:240.97px;font-size:12.79px;line-height:17px;letter-spacing:-0.400px;color:#eaecef;font-weight:700;transform:scaleX(0.9280);">1.35220</div>
<div class="t" style="left:920.42px;top:240.97px;font-size:12.79px;line-height:17px;letter-spacing:-0.400px;color:#eaecef;font-weight:700;transform:scaleX(0.9380);">167,363.30846</div>
<div class="r" style="left:845px;top:261.0px;width:167px;height:15.8px;background:#173a31;"></div>
<div class="t" style="left:740.80px;top:260.97px;font-size:12.79px;line-height:17px;letter-spacing:-0.400px;color:#36bd88;font-weight:400;transform:scaleX(0.9485);">123771.11</div>
<div class="t" style="left:868.32px;top:260.97px;font-size:12.79px;line-height:17px;letter-spacing:-0.400px;color:#eaecef;font-weight:700;transform:scaleX(0.9280);">0.03017</div>
<div class="t" style="left:933.18px;top:260.97px;font-size:12.79px;line-height:17px;letter-spacing:-0.400px;color:#eaecef;font-weight:700;transform:scaleX(0.9360);">3,734.17439</div>
<div class="r" style="left:819px;top:281.0px;width:193px;height:15.8px;background:#173a31;"></div>
<div class="t" style="left:740.80px;top:280.97px;font-size:12.79px;line-height:17px;letter-spacing:-0.400px;color:#36bd88;font-weight:400;transform:scaleX(0.9337);">123771.07</div>
<div class="t" style="left:868.32px;top:280.97px;font-size:12.79px;line-height:17px;letter-spacing:-0.400px;color:#eaecef;font-weight:700;transform:scaleX(0.9280);">0.22039</div>
<div class="t" style="left:926.80px;top:280.97px;font-size:12.79px;line-height:17px;letter-spacing:-0.400px;color:#eaecef;font-weight:700;transform:scaleX(0.9375);">27,277.90612</div>
<div class="r" style="left:817px;top:301.0px;width:195px;height:15.8px;background:#173a31;"></div>
<div class="t" style="left:740.80px;top:300.97px;font-size:12.79px;line-height:17px;letter-spacing:-0.400px;color:#36bd88;font-weight:400;transform:scaleX(0.9337);">123770.40</div>
<div class="t" style="left:868.32px;top:300.97px;font-size:12.79px;line-height:17px;letter-spacing:-0.400px;color:#eaecef;font-weight:700;transform:scaleX(0.9280);">0.01238</div>
<div class="t" style="left:933.18px;top:300.97px;font-size:12.79px;line-height:17px;letter-spacing:-0.400px;color:#eaecef;font-weight:700;transform:scaleX(0.9360);">1,532.27755</div>
<div class="r" style="left:815.8px;top:321.0px;width:196.20000000000005px;height:15.8px;background:#173a31;"></div>
<div class="t" style="left:740.80px;top:320.97px;font-size:12.79px;line-height:17px;letter-spacing:-0.400px;color:#36bd88;font-weight:400;transform:scaleX(0.9337);">123770.30</div>
<div class="t" style="left:868.32px;top:320.97px;font-size:12.79px;line-height:17px;letter-spacing:-0.400px;color:#eaecef;font-weight:700;transform:scaleX(0.9280);">0.00585</div>
<div class="t" style="left:942.56px;top:320.97px;font-size:12.79px;line-height:17px;letter-spacing:-0.400px;color:#eaecef;font-weight:700;transform:scaleX(0.9337);">724.05626</div>
<div class="r" style="left:723px;top:352.5px;width:290px;height:1px;background:#26272c;"></div>
<div class="t" style="left:740.00px;top:362.87px;font-size:12.50px;line-height:16px;letter-spacing:-0.400px;color:#a0a6b1;font-weight:400;transform:scaleX(0.9726);">Price (USDT)</div>
<div class="t" style="left:835.80px;top:362.87px;font-size:12.50px;line-height:16px;letter-spacing:-0.400px;color:#a0a6b1;font-weight:400;transform:scaleX(0.9871);">Amount (BTC)</div>
<div class="t" style="left:969.80px;top:362.87px;font-size:12.50px;line-height:16px;letter-spacing:-0.371px;color:#a0a6b1;font-weight:400;transform:scaleX(1.0000);">Time</div>
<div class="t" style="left:740.90px;top:388.47px;font-size:12.65px;line-height:16px;letter-spacing:-0.400px;color:#36bd88;font-weight:400;transform:scaleX(0.9456);">124,184.38</div>
<div class="t" style="left:854.16px;top:388.47px;font-size:12.65px;line-height:16px;letter-spacing:-0.400px;color:#eaecef;font-weight:700;transform:scaleX(0.9450);">0.0001300</div>
<div class="t" style="left:946.72px;top:388.47px;font-size:12.65px;line-height:16px;letter-spacing:-0.400px;color:#eaecef;font-weight:700;transform:scaleX(0.9130);">13:13:58</div>
<div class="t" style="left:740.90px;top:406.44px;font-size:12.65px;line-height:16px;letter-spacing:-0.400px;color:#36bd88;font-weight:400;transform:scaleX(0.9456);">124,184.43</div>
<div class="t" style="left:854.16px;top:406.44px;font-size:12.65px;line-height:16px;letter-spacing:-0.400px;color:#eaecef;font-weight:700;transform:scaleX(0.9450);">0.0001300</div>
<div class="t" style="left:946.72px;top:406.44px;font-size:12.65px;line-height:16px;letter-spacing:-0.400px;color:#eaecef;font-weight:700;transform:scaleX(0.9130);">13:10:20</div>
<div class="t" style="left:740.90px;top:424.41px;font-size:12.65px;line-height:16px;letter-spacing:-0.400px;color:#36bd88;font-weight:400;transform:scaleX(0.9456);">124,184.41</div>
<div class="t" style="left:854.16px;top:424.41px;font-size:12.65px;line-height:16px;letter-spacing:-0.400px;color:#eaecef;font-weight:700;transform:scaleX(0.9450);">0.0007400</div>
<div class="t" style="left:946.72px;top:424.41px;font-size:12.65px;line-height:16px;letter-spacing:-0.400px;color:#eaecef;font-weight:700;transform:scaleX(0.9130);">13:09:38</div>
<div class="t" style="left:740.90px;top:442.38px;font-size:12.65px;line-height:16px;letter-spacing:-0.400px;color:#36bd88;font-weight:400;transform:scaleX(0.9456);">124,184.39</div>
<div class="t" style="left:854.16px;top:442.38px;font-size:12.65px;line-height:16px;letter-spacing:-0.400px;color:#eaecef;font-weight:700;transform:scaleX(0.9450);">0.0001800</div>
<div class="t" style="left:946.72px;top:442.38px;font-size:12.65px;line-height:16px;letter-spacing:-0.400px;color:#eaecef;font-weight:700;transform:scaleX(0.9130);">13:09:35</div>
<div class="t" style="left:740.90px;top:460.35px;font-size:12.65px;line-height:16px;letter-spacing:-0.400px;color:#36bd88;font-weight:400;transform:scaleX(0.9456);">124,184.42</div>
<div class="t" style="left:854.16px;top:460.35px;font-size:12.65px;line-height:16px;letter-spacing:-0.400px;color:#eaecef;font-weight:700;transform:scaleX(0.9450);">0.0000300</div>
<div class="t" style="left:946.72px;top:460.35px;font-size:12.65px;line-height:16px;letter-spacing:-0.400px;color:#eaecef;font-weight:700;transform:scaleX(0.9130);">13:08:29</div>
<div class="t" style="left:740.90px;top:478.32px;font-size:12.65px;line-height:16px;letter-spacing:-0.400px;color:#36bd88;font-weight:400;transform:scaleX(0.9456);">124,063.82</div>
<div class="t" style="left:854.16px;top:478.32px;font-size:12.65px;line-height:16px;letter-spacing:-0.400px;color:#eaecef;font-weight:700;transform:scaleX(0.9450);">0.0006200</div>
<div class="t" style="left:946.72px;top:478.32px;font-size:12.65px;line-height:16px;letter-spacing:-0.400px;color:#eaecef;font-weight:700;transform:scaleX(0.9130);">13:07:30</div>
<div class="t" style="left:740.90px;top:496.29px;font-size:12.65px;line-height:16px;letter-spacing:-0.400px;color:#36bd88;font-weight:400;transform:scaleX(0.9456);">124,175.92</div>
<div class="t" style="left:854.16px;top:496.29px;font-size:12.65px;line-height:16px;letter-spacing:-0.400px;color:#eaecef;font-weight:700;transform:scaleX(0.9450);">0.0000100</div>
<div class="t" style="left:946.72px;top:496.29px;font-size:12.65px;line-height:16px;letter-spacing:-0.400px;color:#eaecef;font-weight:700;transform:scaleX(0.9130);">13:07:18</div>
<div class="t" style="left:740.90px;top:514.26px;font-size:12.65px;line-height:16px;letter-spacing:-0.400px;color:#36bd88;font-weight:400;transform:scaleX(0.9456);">124,175.92</div>
<div class="t" style="left:854.16px;top:514.26px;font-size:12.65px;line-height:16px;letter-spacing:-0.400px;color:#eaecef;font-weight:700;transform:scaleX(0.9450);">0.0000600</div>
<div class="t" style="left:946.72px;top:514.26px;font-size:12.65px;line-height:16px;letter-spacing:-0.400px;color:#eaecef;font-weight:700;transform:scaleX(0.9130);">13:07:17</div>
<div class="t" style="left:740.90px;top:532.23px;font-size:12.65px;line-height:16px;letter-spacing:-0.400px;color:#36bd88;font-weight:400;transform:scaleX(0.9456);">124,175.91</div>
<div class="t" style="left:854.16px;top:532.23px;font-size:12.65px;line-height:16px;letter-spacing:-0.400px;color:#eaecef;font-weight:700;transform:scaleX(0.9450);">0.0032200</div>
<div class="t" style="left:946.72px;top:532.23px;font-size:12.65px;line-height:16px;letter-spacing:-0.400px;color:#eaecef;font-weight:700;transform:scaleX(0.9130);">12:58:00</div>
<div class="t" style="left:740.90px;top:550.20px;font-size:12.65px;line-height:16px;letter-spacing:-0.400px;color:#36bd88;font-weight:400;transform:scaleX(0.9456);">124,175.90</div>
<div class="t" style="left:854.16px;top:550.20px;font-size:12.65px;line-height:16px;letter-spacing:-0.400px;color:#eaecef;font-weight:700;transform:scaleX(0.9450);">0.0260300</div>
<div class="t" style="left:946.72px;top:550.20px;font-size:12.65px;line-height:16px;letter-spacing:-0.400px;color:#eaecef;font-weight:700;transform:scaleX(0.9130);">12:58:00</div>
<div class="r" style="left:992px;top:385.5px;width:4.2px;height:91px;background:#7a7d87;border-radius:2px;"></div>
<div class="t" style="left:1022.00px;top:51.66px;font-size:15.41px;line-height:20px;letter-spacing:-0.400px;color:#f4f5f6;font-weight:700;transform:scaleX(0.9789);">Manual</div>
<div class="r" style="left:1072px;top:82.5px;width:222px;height:1px;background:#2e2f34;"></div>
<div class="r" style="left:1022px;top:81px;width:50px;height:2.3px;background:#f0c15a;"></div>
<div class="r" style="left:1274px;top:55.8px;width:4px;height:4px;background:#c0c3c9;border-radius:50%;"></div>
<div class="r" style="left:1274px;top:61.8px;width:4px;height:4px;background:#c0c3c9;border-radius:50%;"></div>
<div class="r" style="left:1274px;top:67.9px;width:4px;height:4px;background:#c0c3c9;border-radius:50%;"></div>
<div class="r" style="left:1156.5px;top:102.3px;width:137.3px;height:33px;background:#212226;border:1px solid #36373c;box-sizing:border-box;border-radius:0 4px 4px 0;"></div>
<div class="r" style="left:1022px;top:102.3px;width:136px;height:33px;background:#1e1f23;border:1.4px solid #4fcb98;box-sizing:border-box;border-radius:4px 0 0 4px;"></div>
<div class="t" style="left:1076.00px;top:109.46px;font-size:14.53px;line-height:19px;letter-spacing:-0.400px;color:#2ebd85;font-weight:400;transform:scaleX(0.9632);-webkit-text-stroke:0.5px #2ebd85;">BUY</div>
<div class="t" style="left:1210.50px;top:109.46px;font-size:14.53px;line-height:19px;letter-spacing:-0.400px;color:#c6cad1;font-weight:400;transform:scaleX(0.8882);-webkit-text-stroke:0.5px #c6cad1;">SELL</div>
<div class="t" style="left:1022.50px;top:152.01px;font-size:15.55px;line-height:20px;letter-spacing:-0.329px;color:#f0b43c;font-weight:400;transform:scaleX(1.0000);-webkit-text-stroke:0.5px #f0b43c;">Limit</div>
<div class="t" style="left:1100.00px;top:152.01px;font-size:15.55px;line-height:20px;letter-spacing:-0.400px;color:#b7bdc6;font-weight:400;transform:scaleX(0.9668);-webkit-text-stroke:0.5px #b7bdc6;">Market</div>
<svg style="left:1193.5px;top:160.5px" width="8" height="6" viewBox="0 0 8 6"><path d="M0 0H8L4 5.5Z" fill="#c0c4cb"/></svg>
<div class="t" style="left:1205.50px;top:152.01px;font-size:15.55px;line-height:20px;letter-spacing:-0.298px;color:#b7bdc6;font-weight:400;transform:scaleX(1.0000);-webkit-text-stroke:0.5px #b7bdc6;">Stop-Limit</div>
<svg style="left:1276px;top:156.5px" width="13" height="13" viewBox="0 0 13 13"><circle cx="6.5" cy="6.5" r="6.5" fill="#b9bdc4"/><rect x="5.6" y="5.3" width="1.9" height="4.8" fill="#16171b"/><circle cx="6.55" cy="3.4" r="1.05" fill="#16171b"/></svg>
<div class="r" style="left:1022.5px;top:184.3px;width:271.3px;height:39.1px;background:#1d1e22;border:1px solid #3b3c41;box-sizing:border-box;border-radius:5px;"></div>
<div class="t" style="left:1029.60px;top:186.42px;font-size:12.94px;line-height:17px;letter-spacing:-0.400px;color:#6f727a;font-weight:400;transform:scaleX(0.9464);">Price</div>
<div class="t" style="left:1027.80px;top:203.61px;font-size:15.55px;line-height:20px;letter-spacing:-0.400px;color:#f4f5f6;font-weight:400;transform:scaleX(0.8992);-webkit-text-stroke:0.5px #f4f5f6;">124184.43</div>
<div class="t" style="left:1255.90px;top:196.97px;font-size:13.08px;line-height:17px;letter-spacing:-0.400px;color:#b0b4bb;font-weight:400;transform:scaleX(0.8464);">USDT</div>
<div class="r" style="left:1022.5px;top:232.5px;width:271.3px;height:39.1px;background:#1d1e22;border:1px solid #3b3c41;box-sizing:border-box;border-radius:5px;"></div>
<div class="t" style="left:1029.00px;top:234.82px;font-size:12.06px;line-height:16px;letter-spacing:0.088px;color:#6f727a;font-weight:400;transform:scaleX(1.0000);">Amount</div>
<div class="t" style="left:1263.90px;top:245.32px;font-size:12.94px;line-height:17px;letter-spacing:-0.400px;color:#b0b4bb;font-weight:400;transform:scaleX(0.8496);">BTC</div>
<div class="r" style="left:1029px;top:287.3px;width:258px;height:3.5px;background:#26272c;"></div>
<div class="r" style="left:1088.1px;top:283.8px;width:11px;height:11px;background:#2a2b30;border-radius:50%;"></div>
<div class="r" style="left:1152.0px;top:283.8px;width:11px;height:11px;background:#2a2b30;border-radius:50%;"></div>
<div class="r" style="left:1217.5px;top:283.8px;width:11px;height:11px;background:#2a2b30;border-radius:50%;"></div>
<div class="r" style="left:1281.5px;top:283.8px;width:11px;height:11px;background:#2a2b30;border-radius:50%;"></div>
<div class="r" style="left:1022px;top:282px;width:14px;height:14px;background:#16171b;border:3px solid #ffffff;box-sizing:border-box;border-radius:50%;"></div>
<div class="r" style="left:1022px;top:317px;width:272px;height:1px;background:#2a2b30;"></div>
<div class="t" style="left:1022.00px;top:329.46px;font-size:14.53px;line-height:19px;letter-spacing:-0.298px;color:#eef0f2;font-weight:400;transform:scaleX(1.0000);">More Options</div>
<svg style="left:1114px;top:334px" width="18" height="11" viewBox="0 0 18 11" fill="none" stroke="#eef0f2" stroke-width="2"><path d="M1.5 1.5L9 9L16.5 1.5"/></svg>
<div class="r" style="left:1022px;top:360.2px;width:272px;height:1px;background:#2a2b30;"></div>
<div class="t" style="left:1022.00px;top:379.36px;font-size:14.83px;line-height:19px;letter-spacing:-0.400px;color:#f4f5f6;font-weight:700;transform:scaleX(0.9222);">Assets</div>
<div class="r" style="left:1022px;top:404.8px;width:272px;height:1px;background:#2a2b30;"></div>
<div class="r" style="left:1022.2px;top:422.5px;width:127.8px;height:25.2px;background:#131417;border:1.5px solid #e8e9eb;box-sizing:border-box;border-radius:4px;"></div>
<div class="t" style="left:1065.50px;top:425.77px;font-size:13.95px;line-height:18px;letter-spacing:-0.400px;color:#f4f5f6;font-weight:700;transform:scaleX(0.8515);">Deposit</div>
<div class="r" style="left:1158px;top:422.5px;width:127.7px;height:25.2px;background:#131417;border:1.5px solid #e8e9eb;box-sizing:border-box;border-radius:4px;"></div>
<div class="t" style="left:1195.50px;top:425.87px;font-size:13.66px;line-height:18px;letter-spacing:-0.400px;color:#f4f5f6;font-weight:700;transform:scaleX(0.9076);">Withdraw</div>
<div class="r" style="left:1022px;top:456px;width:272px;height:1px;background:#2a2b30;"></div>
<div class="r" style="left:1017.5px;top:463.9px;width:280.3px;height:47px;background:#7a3df0;"></div>
<div class="r" style="left:1022.3px;top:469.3px;width:270.4px;height:36.5px;background:#2a9e05;box-shadow:inset 0 0 5px rgba(0,0,0,0.55);"></div>
<div class="t" style="left:1143.30px;top:471.30px;font-size:19.62px;line-height:26px;letter-spacing:-0.400px;color:#ffffff;font-weight:700;transform:scaleX(0.8736);text-shadow:1px 1px 2px rgba(0,0,0,0.7);">Buy</div>
</body></html>
